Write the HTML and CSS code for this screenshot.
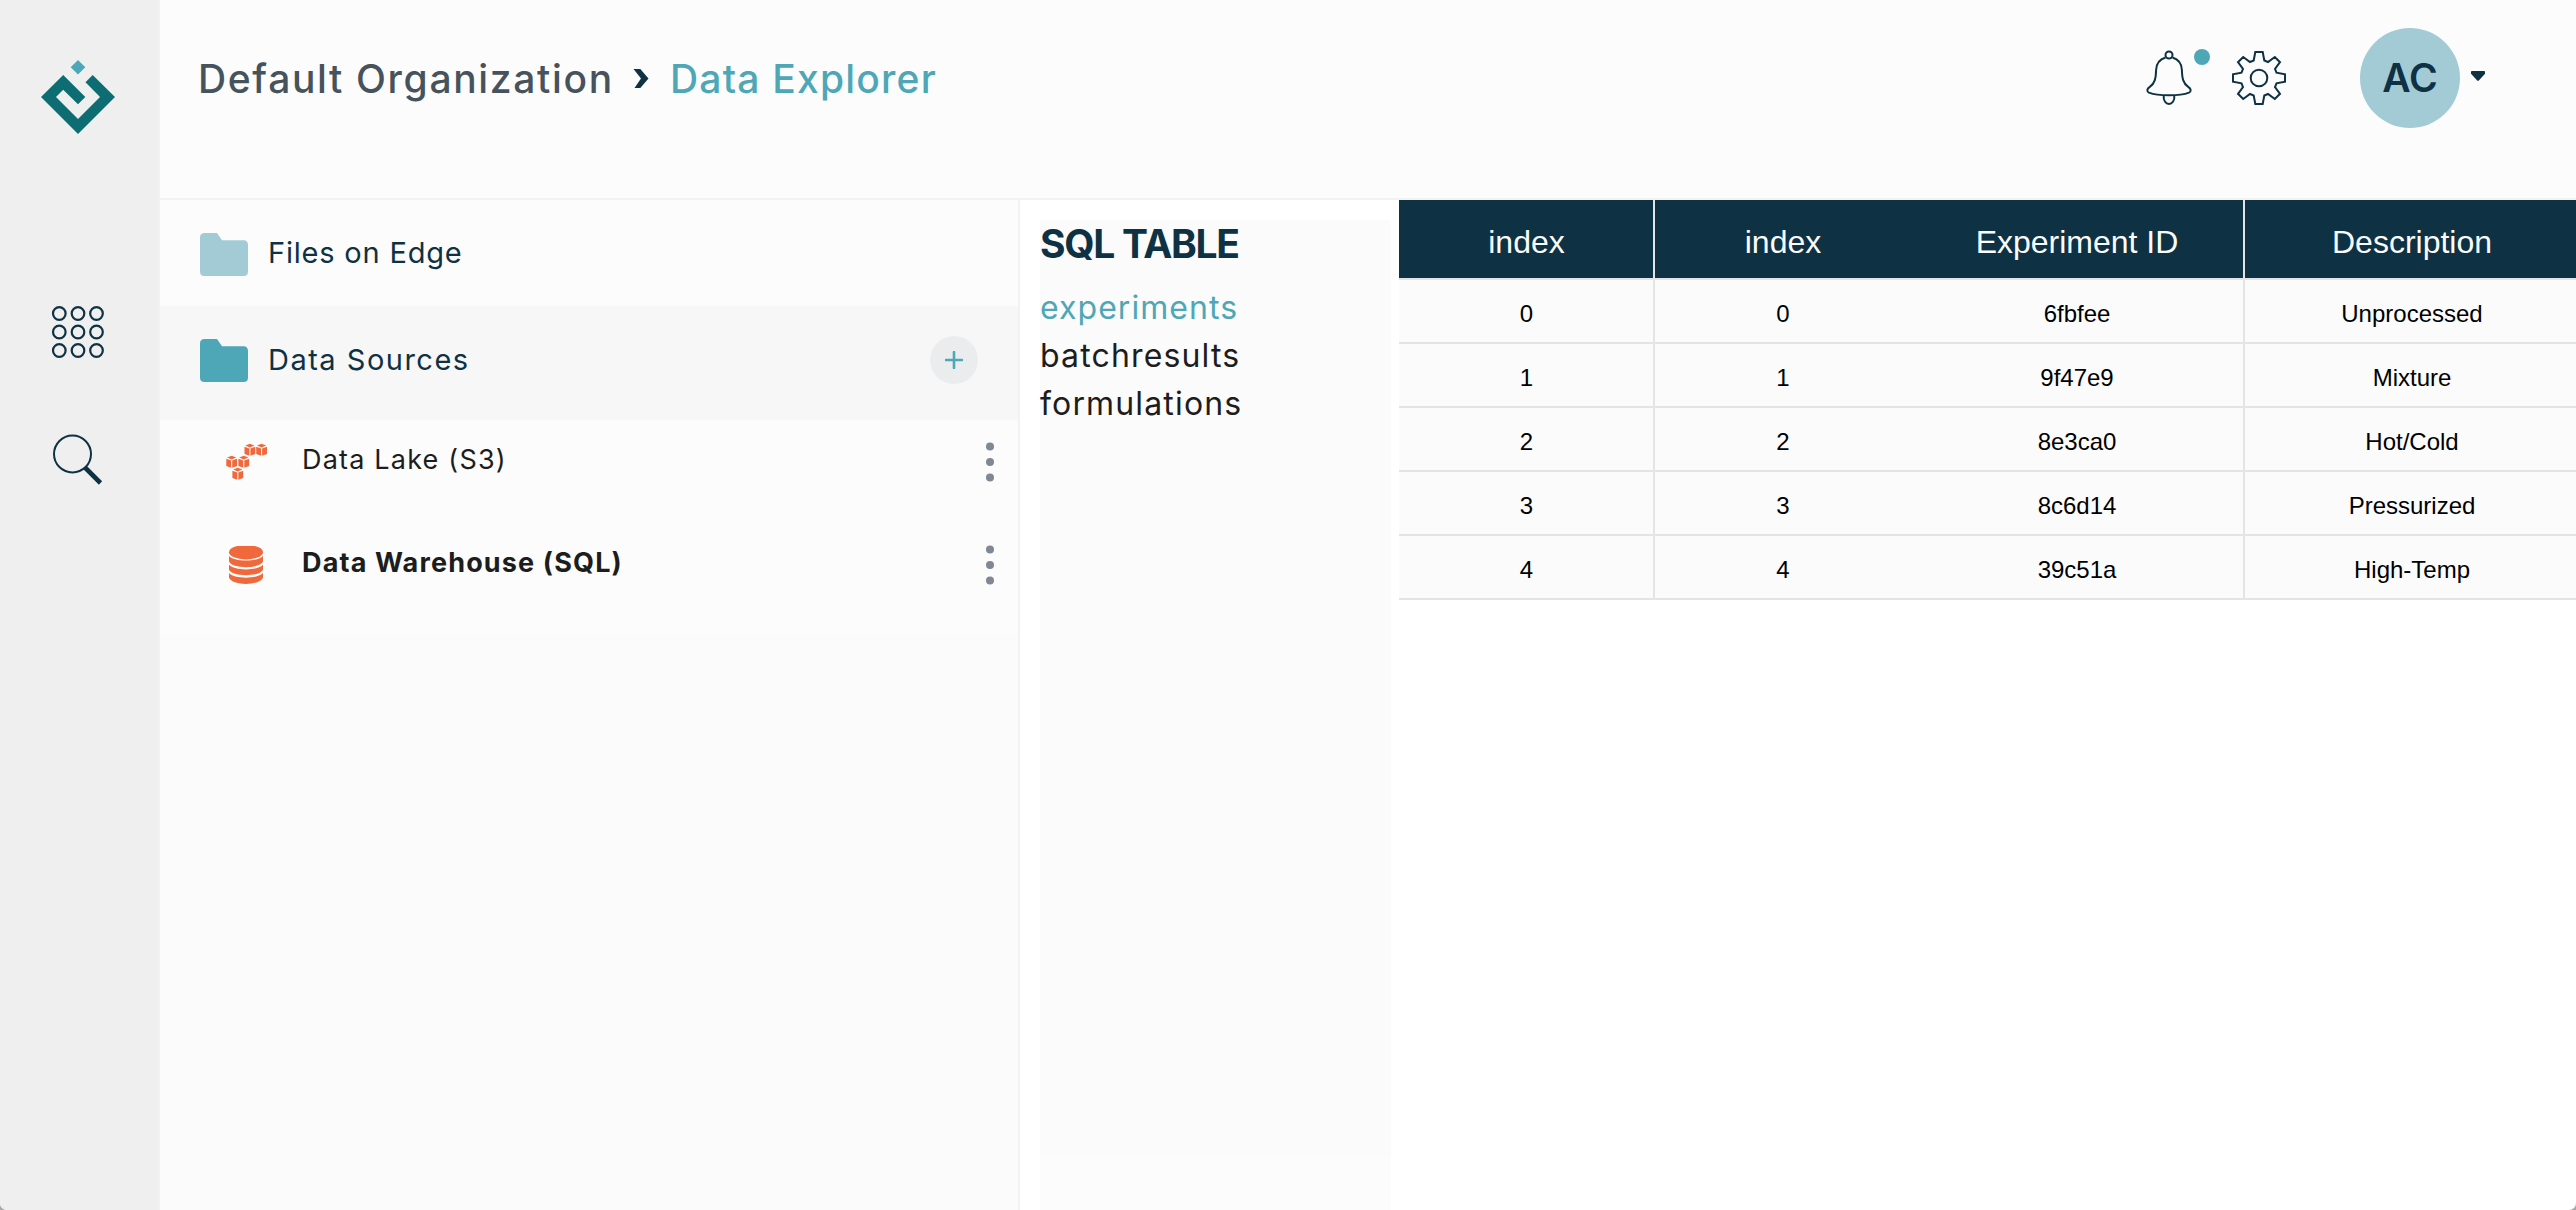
FILE: index.html
```html
<!DOCTYPE html>
<html lang="en">
<head>
<meta charset="utf-8">
<title>Data Explorer</title>
<link rel="stylesheet" href="styles.css">
</head>
<body>
<div class="app">
  <nav class="sidebar">
    <svg class="logo" width="74" height="74" viewBox="41 60 74 74">
      <path fill="#4ea7b7" d="M78 60l7.3 7.3-7.3 7.3-7.3-7.3z"/>
      <path fill="#0d6d73" d="M63.2 75L85.3 97 78 104.300 63.200 89.700 56 97 78 119 100 97 85.500 82.300 92.700 75 115 97 78 134 41 97z"/>
    </svg>
    <svg class="nav-grid" width="54" height="54" viewBox="0 0 54 54" fill="none" stroke="#0f3144" stroke-width="2.200">
      <circle cx="8.300" cy="8.500" r="6.300"/><circle cx="27" cy="8.500" r="6.300"/><circle cx="45.500" cy="8.500" r="6.300"/>
      <circle cx="8.300" cy="27" r="6.300"/><circle cx="27" cy="27" r="6.300"/><circle cx="45.500" cy="27" r="6.300"/>
      <circle cx="8.300" cy="45.500" r="6.300"/><circle cx="27" cy="45.500" r="6.300"/><circle cx="45.500" cy="45.500" r="6.300"/>
    </svg>
    <svg class="nav-search" width="54" height="54" viewBox="0 0 54 54" fill="none" stroke="#0f3144">
      <circle cx="21.500" cy="22" r="18.500" stroke-width="2"/>
      <path d="M34 35.500L49.500 51" stroke-width="4.600"/>
    </svg>
  </nav>
  <div class="page">
    <header class="topbar">
      <div class="breadcrumb">
        <span class="crumb-org">Default Organization</span>
        <svg class="chevron" width="16" height="20" viewBox="0 0 16 20"><path fill="#0f3144" d="M.5 0h6.800l8.200 9.500-8.200 9.500H1.500L8 9.500z"/></svg>
        <span class="crumb-page">Data Explorer</span>
      </div>
      <div class="actions">
        <svg class="bell" width="64" height="56" viewBox="0 0 64 56" fill="none" stroke="#0f3144" stroke-width="2">
          <circle cx="23" cy="5" r="3.500"/>
          <path d="M19.500 7.500C13 9.500 10.300 14 10.100 20C9.900 28 9 33.500 3.800 36.800C.8 38.800.5 41.400 3 42.600C12 46.200 34 46.200 43 42.600C45.500 41.400 45.200 38.800 42.200 36.800C37 33.500 36.100 28 35.900 20C35.700 14 33 9.500 26.500 7.500"/>
          <path d="M17.700 45.300C16.500 56.800 29.500 56.800 28.300 45.300"/>
          <circle cx="56" cy="7" r="8" fill="#4ea7b7" stroke="none"/>
        </svg>
        <svg class="gear" width="54" height="54" viewBox="-27 -27 54 54" fill="none" stroke="#0f3144" stroke-width="2">
          <circle r="8.300"/>
          <path d="M-3.700 -26H3.700L5.300 -17.500L9 -16L15.800 -21L21 -15.800L16 -9L17.500 -5.300L26 -3.700V3.700L17.500 5.300L16 9L21 15.800L15.800 21L9 16L5.300 17.500L3.700 26H-3.700L-5.300 17.500L-9 16L-15.800 21L-21 15.800L-16 9L-17.500 5.300L-26 3.700V-3.700L-17.500 -5.300L-16 -9L-21 -15.800L-15.800 -21L-9 -16L-5.300 -17.500Z"/>
        </svg>
        <div class="avatar">AC</div>
        <svg class="caret" width="14" height="10" viewBox="0 0 14 10"><path fill="#0f3144" d="M.8 0h12.400q.8 0 .8.800v2L7.800 9.600q-.8.600-1.600 0L0 2.800v-2Q0 0 .8 0z"/></svg>
      </div>
    </header>
    <main class="content">
      <section class="sources">
        <div class="folder-row">
          <svg class="folder folder-light" width="48" height="43" viewBox="0 0 48 43"><path d="M4.500 0H17l5 7.200h21.500Q48 7.200 48 12v26.500Q48 43 43.500 43h-39Q0 43 0 38.500v-34Q0 0 4.500 0z"/></svg>
          <span class="folder-files">Files on Edge</span>
        </div>
        <div class="folder-row folder-active">
          <svg class="folder" width="48" height="43" viewBox="0 0 48 43"><path d="M4.500 0H17l5 7.200h21.500Q48 7.200 48 12v26.500Q48 43 43.500 43h-39Q0 43 0 38.500v-34Q0 0 4.500 0z"/></svg>
          <span class="folder-sources">Data Sources</span>
          <span class="add"><svg width="18" height="18" viewBox="0 0 18 18"><path d="M9 1v16M1 9h16" stroke="#4ea7b7" stroke-width="2.600" stroke-linecap="round"/></svg></span>
        </div>
        <div class="source-list">
          <div class="source-row">
            <svg class="source-icon" width="42" height="38" viewBox="0 0 42 38">
              <defs><g id="cube" fill="#f0693d"><path d="M5.400 0L10 1.700 5.400 3.600.8 1.700z"/><path d="M0 3L4.900 4.700V12L0 10.200z"/><path d="M10.800 3L5.900 4.700V12l4.900-1.800z"/></g></defs>
              <use href="#cube" x="19.500" y=".8"/><use href="#cube" x="31.200" y=".8"/>
              <use href="#cube" x="1.300" y="12.800"/><use href="#cube" x="13.400" y="12.800"/>
              <use href="#cube" x="7.400" y="24.800"/>
            </svg>
            <span class="source-lake">Data Lake (S3)</span>
            <svg class="more" width="8" height="40" viewBox="0 0 8 40" fill="#7f8893"><circle cx="4" cy="4.500" r="4"/><circle cx="4" cy="20" r="4"/><circle cx="4" cy="35.500" r="4"/></svg>
          </div>
          <div class="source-row">
            <svg class="source-icon" width="42" height="39" viewBox="0 1 42 39" fill="#f0693d">
              <ellipse cx="21" cy="7.200" rx="17" ry="7.200"/>
              <path d="M4 10.800C8 17.200 34 17.200 38 10.800V16.500C35 24 7 24 4 16.500z"/>
              <path d="M4 19.600C8 26 34 26 38 19.600V24.800C35 32 7 32 4 24.800z"/>
              <path d="M4 27.800C8 34.300 34 34.300 38 27.800V32.500C35 41 7 41 4 32.500z"/>
            </svg>
            <span class="source-warehouse">Data Warehouse (SQL)</span>
            <svg class="more" width="8" height="40" viewBox="0 0 8 40" fill="#7f8893"><circle cx="4" cy="4.500" r="4"/><circle cx="4" cy="20" r="4"/><circle cx="4" cy="35.500" r="4"/></svg>
          </div>
        </div>
      </section>
      <section class="tables">
        <div class="tables-box">
          <h2 class="tables-title">SQL TABLE</h2>
          <ul class="tables-list">
            <li class="selected">experiments</li>
            <li>batchresults</li>
            <li>formulations</li>
          </ul>
        </div>
      </section>
      <section class="results">
        <div class="row head"><div>index</div><div>index</div><div>Experiment ID</div><div>Description</div></div>
        <div class="row"><div>0</div><div>0</div><div>6fbfee</div><div>Unprocessed</div></div>
        <div class="row"><div>1</div><div>1</div><div>9f47e9</div><div>Mixture</div></div>
        <div class="row"><div>2</div><div>2</div><div>8e3ca0</div><div>Hot/Cold</div></div>
        <div class="row"><div>3</div><div>3</div><div>8c6d14</div><div>Pressurized</div></div>
        <div class="row"><div>4</div><div>4</div><div>39c51a</div><div>High-Temp</div></div>
      </section>
    </main>
  </div>
</div>
</body>
</html>
```
FILE: styles.css
```css
* { box-sizing: border-box; }
body { margin: 0; background: #a8a8a8; font-family: Inter, "Open Sans", sans-serif; color: #1d1d1d; }
.app { display: flex; width: 2576px; height: 1210px; overflow: hidden; background: #fff; border-radius: 0 0 7px 7px; }
.sidebar { display: flex; flex-direction: column; width: 160px; padding: 60px 0 0 41px; background: #efefef; border-right: 2px solid #f2f2f2; }
.nav-grid { margin: 171px 0 0 10px; }
.nav-search { margin: 73px 0 0 10px; }
.sidebar svg, .topbar svg, .sources svg { flex: none; display: block; }
.page { display: flex; flex-direction: column; flex: 1; min-width: 0; }
.topbar { display: flex; justify-content: space-between; align-items: flex-start; height: 200px; padding: 28px 91px 0 38px; background: #fcfcfc; border-bottom: 2px solid #f2f2f2; }
.breadcrumb { display: flex; align-items: center; height: 101px; font-size: 39px; font-weight: 500; white-space: nowrap; }
.crumb-org { width: 435px; color: #46535c; letter-spacing: 1.65px; }
.chevron { margin-right: 21px; }
.crumb-page { color: #4ea7b7; letter-spacing: 1.2px; }
.actions { display: flex; align-items: center; height: 100px; }
.bell { overflow: visible; }
.gear { margin-left: 22px; }
.avatar { width: 100px; height: 100px; margin: 0 11px 0 74px; border-radius: 50%; background: #a3cbd5; color: #0f3144; font-size: 39px; font-weight: 600; line-height: 100px; text-align: center; }
.caret { margin-top: -4px; }
.content { display: flex; flex: 1; min-height: 0; }
.sources { width: 860px; background: #fbfbfb; border-right: 2px solid #f2f2f2; }
.folder-row { display: flex; align-items: center; height: 106px; padding: 3px 40px 0; background: #fcfcfc; color: #0f3144; font-size: 29px; }
.folder-active { height: 114px; padding-top: 0; padding-bottom: 6px; background: #f7f7f7; }
.folder { margin-right: 20px; fill: #4ea7b7; }
.folder-light { fill: #a3cbd5; }
.folder-row .folder-files { margin-bottom: 5px; letter-spacing: .8px; }
.folder-row .folder-sources { margin-bottom: 2px; letter-spacing: 1.5px; }
.add { display: grid; place-items: center; width: 48px; height: 48px; margin-left: auto; border-radius: 50%; background: #ebecee; }
.source-list { height: 214px; background: #fcfcfc; font-size: 27px; }
.source-row { display: flex; align-items: center; height: 103px; padding: 0 24px 19px 65px; }
.source-row span { flex: 1; margin: 0 0 5px 35px; letter-spacing: 1.2px; }
.source-row .source-warehouse { font-weight: 700; letter-spacing: 1.15px; }
.tables { width: 379px; padding: 20px 8px 0 20px; }
.tables-box { height: 990px; background: linear-gradient(#fbfbfb 935px, #fcfcfc 935px); }
.tables-title { margin: 0; color: #0f3144; font-size: 39px; font-weight: 700; line-height: 48px; letter-spacing: -1.3px; }
.tables-list { margin: 16px 0 0; padding: 0; list-style: none; font-size: 32px; line-height: 48px; letter-spacing: 1.15px; }
.selected { color: #4ea7b7; letter-spacing: 1.05px; }
.results { width: 1177px; font-family: "Liberation Sans", Arial, sans-serif; font-size: 24px; color: #000; }
.row { display: grid; grid-template-columns: 256px 256px 334px 334px; height: 64px; width: 1180px; background: #fbfbfb; border-bottom: 2px solid #e3e4e6; line-height: 68px; text-align: center; }
.row div { height: 62px; }
.row > :nth-child(1), .row > :nth-child(3) { border-right: 2px solid #e3e4e6; }
.row > :nth-child(1) { padding-left: 1px; }
.head { height: 80px; background: #0f3144; color: #fbfbfb; font-size: 32px; line-height: 84px; }
.head div { height: 78px; }
```
